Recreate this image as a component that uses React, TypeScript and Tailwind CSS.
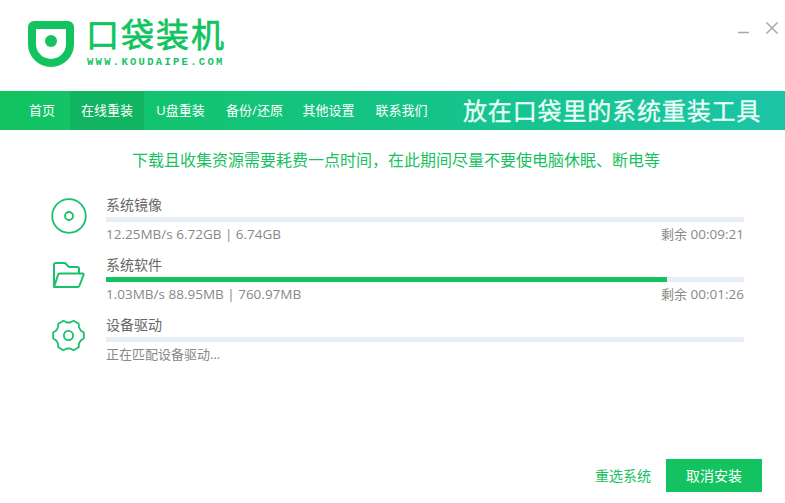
import React from "react";

const cjk = "font-['Open_Sans','Noto_Sans_CJK_SC',sans-serif]";

const tabs = [
  { label: "首页", cls: "w-[56px] ml-[14px]" },
  { label: "在线重装", cls: "w-[74px] bg-[#10b461]" },
  { label: "U盘重装", cls: "w-[73px]" },
  { label: "备份/还原", cls: "w-[75px]" },
  { label: "其他设置", cls: "w-[73px]" },
  { label: "联系我们", cls: "w-[73px]" },
];

const polar = (r: number, deg: number) => {
  const a = (deg * Math.PI) / 180;
  return `${(17.5 + r * Math.cos(a)).toFixed(2)} ${(18.5 + r * Math.sin(a)).toFixed(2)}`;
};

// six blunt teeth with scooped valleys between them
const gearPath = () => {
  let d = `M${polar(15.6, -11)}`;
  for (let k = 0; k < 6; k++) {
    const a = k * 60;
    d += ` L${polar(15.6, a + 11)}`;
    d += ` L${polar(13.4, a + 21)}`;
    d += ` Q${polar(12.8, a + 30)} ${polar(13.4, a + 39)}`;
    d += ` L${polar(15.6, a + 49)}`;
  }
  return d + "z";
};

const DiscIcon = () => (
  <svg width="38" height="38" viewBox="0 0 38 38" fill="none" stroke="#17c26a" strokeWidth="1.8">
    <circle cx="18" cy="19" r="16.8" />
    <circle cx="18" cy="19" r="4" />
  </svg>
);

const FolderIcon = () => (
  <svg width="36" height="34" viewBox="0 0 36 34" fill="none" stroke="#17c26a" strokeWidth="2" strokeLinejoin="round">
    <path d="M3 30V7.5A1.5 1.5 0 0 1 4.5 6H14l4 4h8.5a1.5 1.5 0 0 1 1.5 1.5V16" />
    <path d="M3 30l4-12a2 2 0 0 1 2-1.5h22.5a1 1 0 0 1 1 1.5L28.5 28.5a2 2 0 0 1-2 1.5H4a1 1 0 0 1-1 0z" />
  </svg>
);

const GearIcon = () => (
  <svg width="36" height="36" viewBox="0 0 36 36" fill="none" stroke="#17c26a" strokeWidth="1.8" strokeLinejoin="round">
    <path d={gearPath()} />
    <circle cx="17.5" cy="18.5" r="4.6" />
  </svg>
);

const rows = [
  {
    icon: <DiscIcon />,
    title: "系统镜像",
    progress: 0,
    status: "12.25MB/s 6.72GB | 6.74GB",
    time: "00:09:21",
  },
  {
    icon: <FolderIcon />,
    title: "系统软件",
    progress: 87.9,
    status: "1.03MB/s 88.95MB | 760.97MB",
    time: "00:01:26",
  },
  {
    icon: <GearIcon />,
    title: "设备驱动",
    progress: 0,
    status: "正在匹配设备驱动...",
    time: "",
  },
];

export default function App() {
  return (
    <div className={`w-[785px] h-[503px] bg-white flex flex-col overflow-hidden ${cjk}`}>
      <header className="h-[91px] flex justify-between">
        <div className="flex items-start pl-[28px] pt-[21px] gap-[12px]">
          <svg width="46" height="46" viewBox="0 0 46 46" fill="none">
            <path
              d="M4 6a2 2 0 0 1 2-2h34a2 2 0 0 1 2 2v17a19 19 0 0 1-38 0z"
              stroke="#12c35f"
              strokeWidth="8"
            />
            <circle cx="23" cy="20" r="6" fill="#12c35f" />
          </svg>
          <div className="flex flex-col -mt-[5px]">
            <span className="text-[33px] leading-[38px] font-normal text-[#12c35f] [-webkit-text-stroke:0.7px_#12c35f] tracking-[2px] whitespace-nowrap">
              口袋装机
            </span>
            <span className="mt-[2px] ml-[1px] text-[10.5px] leading-[12px] font-bold text-[#12c35f] tracking-[2.3px] whitespace-nowrap font-['Liberation_Mono',monospace]">
              WWW.KOUDAIPE.COM
            </span>
          </div>
        </div>
        <div className="flex items-start gap-[15px] pr-[6px] pt-[21px] text-[#a8a8a8]">
          <svg width="13" height="14" viewBox="0 0 13 14" className="mt-[1px]" stroke="currentColor" strokeWidth="1.5">
            <path d="M1 10.5h11" />
          </svg>
          <svg width="14" height="14" viewBox="0 0 14 14" stroke="currentColor" strokeWidth="1.5">
            <path d="M1.5 1.5l11 11M12.5 1.5l-11 11" />
          </svg>
        </div>
      </header>

      <nav className="h-[39px] flex items-stretch bg-gradient-to-r from-[#12c35f] to-[#1cc4a6] text-white">
        {tabs.map((t) => (
          <div key={t.label} className={`${t.cls} shrink-0 flex items-center justify-center text-[13px] whitespace-nowrap`}>
            {t.label}
          </div>
        ))}
        <div className="ml-[25px] flex items-center text-[24px] tracking-[0.85px] [-webkit-text-stroke:0.3px_#eafff6] whitespace-nowrap text-[#eafff6]">
          放在口袋里的系统重装工具
        </div>
      </nav>

      <p className="mt-[20px] ml-[7px] text-center text-[16px] leading-[20px] text-[#17c15f] whitespace-nowrap">
        下载且收集资源需要耗费一点时间，在此期间尽量不要使电脑休眠、断电等
      </p>

      <div className="mt-[26px] flex flex-col gap-[12px] pl-[51px] pr-[41px]">
        {rows.map((r) => (
          <div key={r.title} className="flex h-[48px]">
            <div className="w-[55px] shrink-0 pt-[1px]">{r.icon}</div>
            <div className="flex-1 flex flex-col">
              <div className="text-[14px] leading-[18px] text-[#666]">{r.title}</div>
              <div className="h-[5px] bg-[#e8eef8] mt-[3px]">
                <div className="h-full bg-[#12c35f]" style={{ width: `${r.progress}%` }} />
              </div>
              <div className="mt-[2px] flex justify-between text-[13.5px] leading-[20px] text-[#888]">
                {r.time ? <span>{r.status}</span> : <span className="text-[13px]">{r.status}</span>}
                {r.time && (
                  <span>
                    <span className="text-[13px]">剩余</span> {r.time}
                  </span>
                )}
              </div>
            </div>
          </div>
        ))}
      </div>

      <div className="mt-auto mb-[11px] pr-[23px] flex items-center justify-end gap-[15px]">
        <span className="text-[14px] text-[#17c15f]">重选系统</span>
        <button className="w-[96px] h-[33px] bg-[#12c35f] text-white text-[14px]">取消安装</button>
      </div>
    </div>
  );
}
